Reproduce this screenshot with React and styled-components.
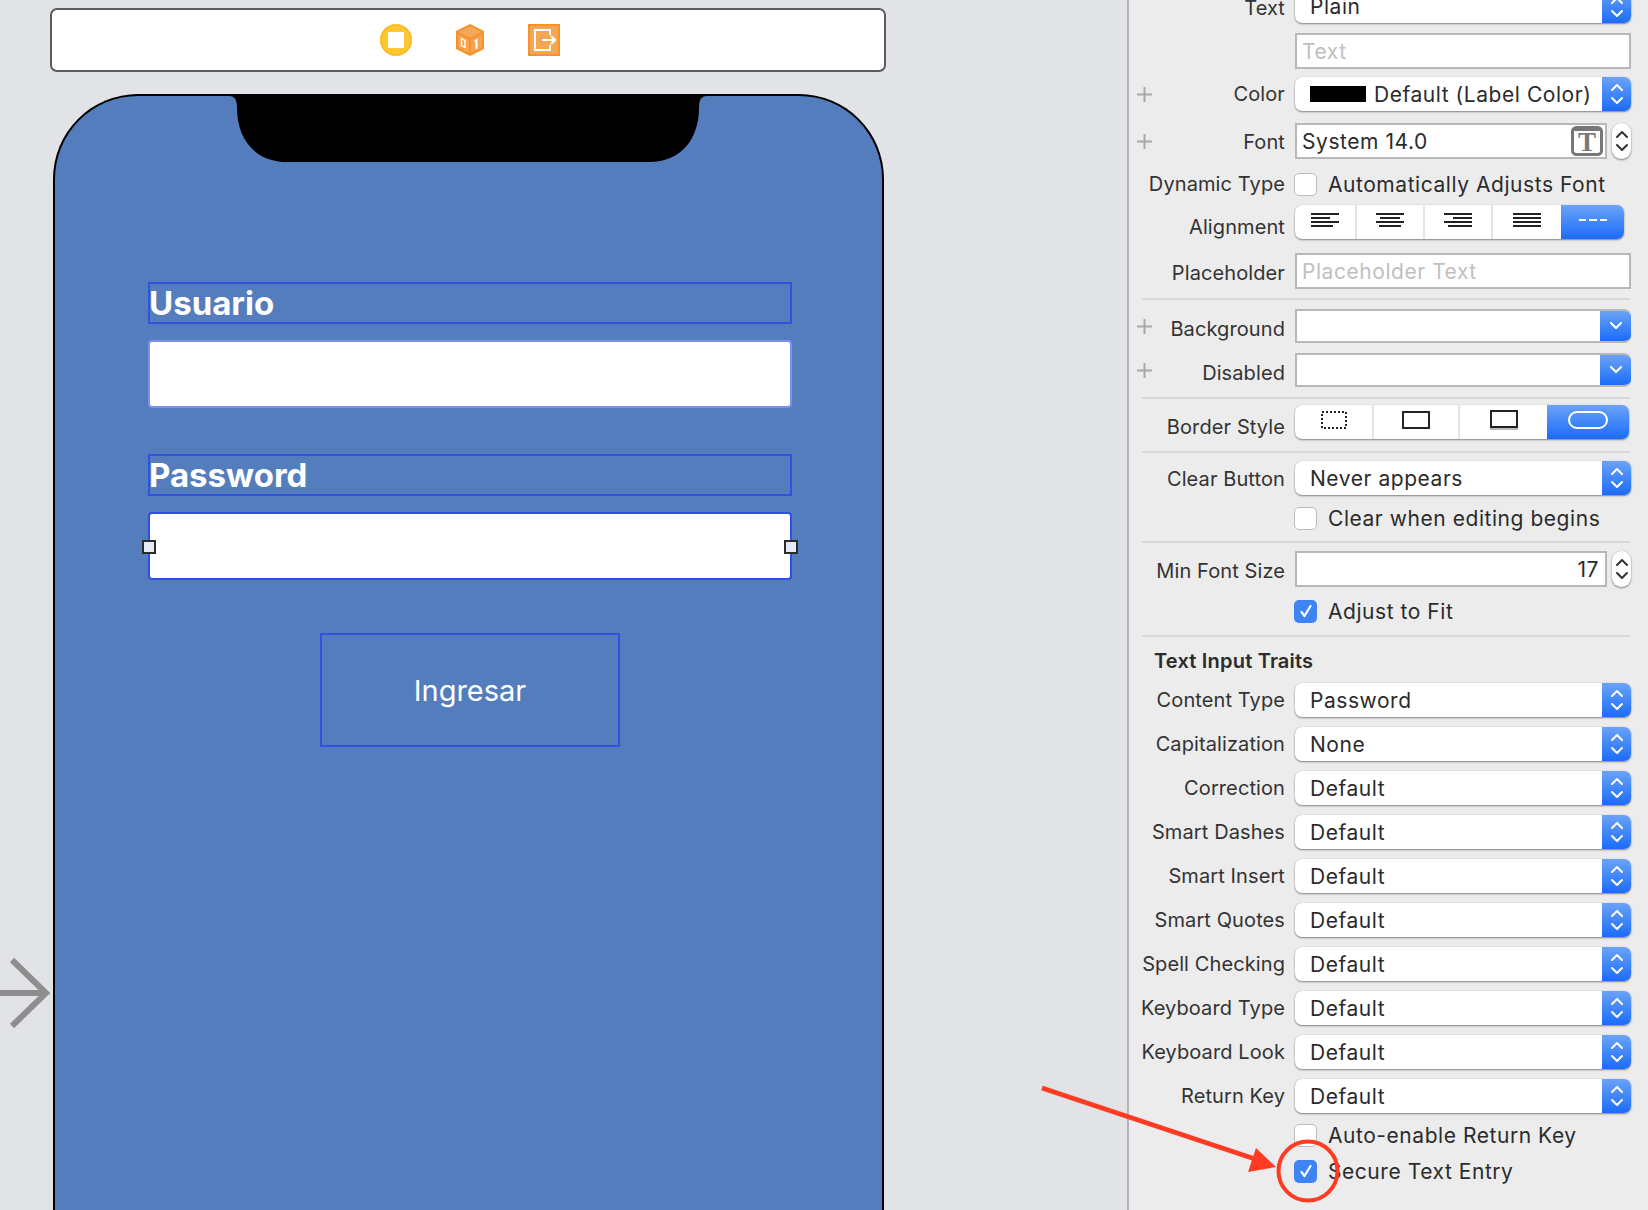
import React from 'react';
import styled, { createGlobalStyle } from 'styled-components';

const GlobalStyle = createGlobalStyle`
  html, body { margin: 0; padding: 0; }
  body { background: #e1e3e7; font-family: Inter, "Liberation Sans", sans-serif; }
`;

const Page = styled.div`
  position: relative;
  display: flex;
  width: 1648px;
  height: 1210px;
  overflow: hidden;
  background: #e1e3e7;
`;

const Canvas = styled.div`
  width: 1127px;
  flex: none;
  display: flex;
  flex-direction: column;
  padding: 8px 0 0 50px;
  box-sizing: border-box;
`;

const Dock = styled.div`
  width: 836px;
  height: 64px;
  flex: none;
  box-sizing: border-box;
  display: flex;
  align-items: center;
  justify-content: center;
  gap: 44px;
  padding-left: 4px;
  background: #fff;
  border: 2px solid #5c5c5e;
  border-radius: 7px;
`;

const Device = styled.div`
  position: relative;
  width: 831px;
  height: 1200px;
  flex: none;
  margin: 22px 0 0 3px;
  box-sizing: border-box;
  background: #547dbd;
  border: 2px solid #000;
  border-bottom: none;
  border-radius: 85px 85px 0 0;
  display: flex;
  flex-direction: column;
  align-items: flex-start;
  padding: 186px 0 0 93px;
`;

const NotchShape = styled.svg`
  position: absolute;
  left: 174px;
  top: -2px;
`;

const FieldLabel = styled.div`
  width: 644px;
  height: 42px;
  box-sizing: border-box;
  border: 2px solid #3350e0;
  margin-top: ${p => p.$gap || 0}px;
  color: #fff;
  font-weight: 700;
  font-size: 33px;
  line-height: 38px;
  text-indent: -1px;
`;

const FieldInput = styled.div`
  position: relative;
  width: 644px;
  height: 68px;
  box-sizing: border-box;
  margin-top: 16px;
  background: #fff;
  border: 2px solid ${p => (p.$selected ? '#2f4de8' : '#7f8ff0')};
  border-radius: 4px;
`;

const Handle = styled.span`
  position: absolute;
  top: 26px;
  ${p => (p.$side === 'left' ? 'left: -8px;' : 'right: -8px;')}
  width: 14px;
  height: 14px;
  box-sizing: border-box;
  background: #e6eaf6;
  border: 2px solid #2b2b2b;
`;

const LoginButton = styled.div`
  width: 300px;
  height: 114px;
  box-sizing: border-box;
  margin: 53px 0 0 172px;
  border: 2px solid #3350e0;
  display: flex;
  align-items: center;
  justify-content: center;
  color: #fff;
  font-size: 29px;
`;

const Panel = styled.div`
  flex: 1;
  box-sizing: border-box;
  border-left: 2px solid #b4b4b6;
  background: #ececec;
  padding-top: 1px;
  color: #2b2b2b;
  font-size: 21px;
  letter-spacing: 0.55px;
`;

const Row = styled.div`
  display: flex;
  align-items: center;
  height: ${p => p.$h || 34}px;
  margin-top: ${p => p.$gap || 0}px;
`;

const LabelCell = styled.div`
  width: 156px;
  flex: none;
  box-sizing: border-box;
  padding-left: 8px;
  display: flex;
  align-items: center;
  justify-content: ${p => (p.$plus ? 'space-between' : 'flex-end')};
  white-space: nowrap;
  font-size: 20px;
  letter-spacing: 0.1px;
  color: #333;
`;

// reference labels sit a little under the middle of their control
const LabelText = styled.span`
  padding-top: ${p => (p.$drop || 0) * 2}px;
`;

const Control = styled.div`
  display: flex;
  align-items: center;
  margin-left: 10px;
  width: 336px;
  height: 100%;
`;

const Popup = styled.div`
  width: 100%;
  height: 100%;
  display: flex;
  align-items: center;
  box-sizing: border-box;
  border-radius: 7px;
  overflow: hidden;
  background: #fff;
  box-shadow: 0 1px 2px rgba(0, 0, 0, 0.45), 0 0 1px rgba(0, 0, 0, 0.2);
`;

const PopupText = styled.div`
  flex: 1;
  padding-left: 15px;
  display: flex;
  align-items: center;
  gap: 8px;
  white-space: nowrap;
`;

const Swatch = styled.span`
  width: 56px;
  height: 16px;
  background: #000;
`;

const BlueTab = styled.div`
  width: ${p => p.$w || 29}px;
  height: 100%;
  flex: none;
  display: flex;
  align-items: center;
  justify-content: center;
  background: linear-gradient(#6ba3f7, #1a6cf9);
`;

const TextBox = styled.div`
  width: ${p => p.$w || 336}px;
  height: 100%;
  flex: none;
  box-sizing: border-box;
  display: flex;
  align-items: center;
  justify-content: ${p => (p.$end ? 'flex-end' : 'space-between')};
  padding: 0 ${p => (p.$end ? 6 : 2)}px 0 5px;
  background: #fff;
  border: 2px solid #b8b8b8;
  color: ${p => (p.$muted ? '#c0c0c0' : '#2b2b2b')};
`;

const Stepper = styled.div`
  width: 19px;
  height: 100%;
  flex: none;
  margin-left: 5px;
  box-sizing: border-box;
  display: flex;
  align-items: center;
  justify-content: center;
  background: #fff;
  border-radius: 9px;
  box-shadow: 0 1px 2px rgba(0, 0, 0, 0.45), 0 0 1px rgba(0, 0, 0, 0.25);
`;

const WellPopup = styled.div`
  width: 100%;
  height: 100%;
  display: flex;
  justify-content: space-between;
  box-sizing: border-box;
  background: #fff;
  border: 2px solid #b8b8b8;
  border-right: none;
  border-radius: 0 7px 7px 0;
  overflow: hidden;
`;

const CheckRow = styled.div`
  display: flex;
  align-items: center;
  gap: 11px;
  margin-left: -1px;
  white-space: nowrap;
`;

const Box = styled.span`
  width: 23px;
  height: 23px;
  flex: none;
  box-sizing: border-box;
  border-radius: 5px;
  display: flex;
  align-items: center;
  justify-content: center;
  background: ${p => (p.$on ? '#3f84f5' : '#fff')};
  border: ${p => (p.$on ? 'none' : '1px solid #bcbcbc')};
`;

const Segments = styled.div`
  display: flex;
  width: ${p => p.$w}px;
  height: 100%;
  border-radius: 7px;
  overflow: hidden;
  background: #fff;
  box-shadow: 0 1px 2px rgba(0, 0, 0, 0.45), 0 0 1px rgba(0, 0, 0, 0.2);
`;

const Segment = styled.div`
  width: ${p => p.$w}px;
  flex: none;
  box-sizing: border-box;
  display: flex;
  align-items: center;
  justify-content: center;
  padding-bottom: 4px;
  border-right: ${p => (p.$last || p.$on ? 'none' : '2px solid #e4e4e4')};
  background: ${p => (p.$on ? 'linear-gradient(#6ba3f7, #1a6cf9)' : 'transparent')};
`;

const Separator = styled.div`
  height: 2px;
  margin: ${p => p.$gap}px 0 0 13px;
  width: 488px;
  background: #d8d8d8;
`;

const Heading = styled.div`
  height: 24px;
  line-height: 24px;
  margin: 12px 0 0 25px;
  font-size: 20px;
  font-weight: 600;
  letter-spacing: 0.2px;
  color: #2b2b2b;
`;

const Annotation = styled.svg`
  position: absolute;
  left: 0;
  top: 0;
  pointer-events: none;
`;

const Updown = ({ color = '#fff' }) => (
  <svg width="16" height="24" viewBox="0 0 16 24" fill="none" stroke={color} strokeWidth="2" strokeLinecap="round" strokeLinejoin="round">
    <path d="M3 8 8 3l5 5M3 16l5 5 5-5" />
  </svg>
);

const Chevron = () => (
  <svg width="16" height="12" viewBox="0 0 16 12" fill="none" stroke="#fff" strokeWidth="2.2" strokeLinecap="round" strokeLinejoin="round">
    <path d="M3 3l5 5 5-5" />
  </svg>
);

const Plus = () => (
  <svg width="15" height="15" viewBox="0 0 15 15" stroke="#a8a8a8" strokeWidth="2">
    <path d="M0 7.5h15M7.5 0v15" />
  </svg>
);

const Check = () => (
  <svg width="16" height="16" viewBox="0 0 16 16" fill="none" stroke="#fff" strokeWidth="2.2" strokeLinecap="round" strokeLinejoin="round">
    <path d="M3.5 9l3 4 6-10" />
  </svg>
);

const FontIcon = () => (
  <svg width="32" height="30" viewBox="0 0 32 30">
    <rect x="1.5" y="1.5" width="29" height="27" rx="4" fill="#fff" stroke="#777" strokeWidth="3" />
    <path d="M2 2h28v3H2z" fill="#777" />
    <text x="16" y="25" textAnchor="middle" fontFamily="Liberation Serif, serif" fontWeight="700" fontSize="27" letterSpacing="0" fill="#777">T</text>
  </svg>
);

// four text lines, x/w per line
const AlignGlyph = ({ lines }) => (
  <svg width="28" height="14" viewBox="0 0 28 14" fill="#222">
    {lines.map(([x, w], i) => <rect key={i} x={x} y={i * 4} width={w} height="2" />)}
  </svg>
);

const DashGlyph = () => (
  <svg width="28" height="14" viewBox="0 0 28 14" fill="#fff">
    <rect x="0" y="6" width="7" height="2" />
    <rect x="10" y="6" width="8" height="2" />
    <rect x="21" y="6" width="7" height="2" />
  </svg>
);

const BorderGlyph = ({ kind }) => {
  if (kind === 'none') {
    return (
      <svg width="26" height="18" viewBox="0 0 26 18" fill="none">
        <rect x="1" y="1" width="24" height="16" stroke="#222" strokeWidth="2" strokeDasharray="2 2" />
      </svg>
    );
  }
  if (kind === 'line') {
    return (
      <svg width="28" height="18" viewBox="0 0 28 18" fill="none">
        <rect x="1" y="1" width="26" height="16" stroke="#222" strokeWidth="2" />
      </svg>
    );
  }
  if (kind === 'bezel') {
    return (
      <svg width="28" height="20" viewBox="0 0 28 20" fill="none">
        <rect x="1" y="1" width="26" height="16" stroke="#222" strokeWidth="2" />
        <path d="M0 19h28" stroke="#bbb" strokeWidth="2" />
      </svg>
    );
  }
  return (
    <svg width="40" height="18" viewBox="0 0 40 18" fill="none">
      <rect x="1" y="1" width="38" height="16" rx="8" stroke="#fff" strokeWidth="2" />
    </svg>
  );
};

const RecordIcon = () => (
  <svg width="32" height="32" viewBox="0 0 32 32">
    <circle cx="16" cy="16" r="16" fill="#fdc72f" />
    <circle cx="16" cy="16" r="15" fill="none" stroke="#fbb92a" strokeWidth="1.5" />
    <rect x="8" y="8" width="16" height="16" fill="#fff" />
  </svg>
);

const CubeIcon = () => (
  <svg width="28" height="32" viewBox="0 0 28 32">
    <path d="M14 0 28 7v18L14 32 0 25V7z" fill="#f6922b" />
    <path d="M14 2.5 25.5 8 14 13.5 2.5 8z" fill="#f4a95a" />
    <path d="M2 10l11 5.5V29L2 23.5z" fill="#f4a450" />
    <path d="M15 15.5 26 10v13.5L15 29z" fill="#f4a450" />
    <path d="M5.5 14.5l3.5 2v7l-3.5-2z" fill="none" stroke="#fff" strokeWidth="1.3" />
    <path d="M18.5 17.5l2-1.2v8.4" fill="none" stroke="#fff" strokeWidth="2" />
  </svg>
);

const ExitIcon = () => (
  <svg width="32" height="32" viewBox="0 0 32 32">
    <rect x="1" y="1" width="30" height="30" fill="#f4a653" stroke="#f6922b" strokeWidth="2" />
    <path d="M22 11V6H7v20h15v-5" fill="none" stroke="#fff" strokeWidth="2" />
    <path d="M14 16h13M23 12l4 4-4 4" fill="none" stroke="#fff" strokeWidth="2" />
  </svg>
);

const alignments = [
  { w: 62, lines: [[0, 28], [0, 19], [0, 28], [0, 22]] },
  { w: 68, lines: [[0, 28], [4, 20], [0, 28], [3, 22]] },
  { w: 68, lines: [[0, 28], [9, 19], [0, 28], [4, 24]] },
  { w: 68, lines: [[0, 28], [0, 28], [0, 28], [0, 28]] },
];

const borderStyles = [
  { w: 79, kind: 'none' },
  { w: 86, kind: 'line' },
  { w: 87, kind: 'bezel' },
];

const traits = [
  ['Content Type', 'Password'],
  ['Capitalization', 'None'],
  ['Correction', 'Default'],
  ['Smart Dashes', 'Default'],
  ['Smart Insert', 'Default'],
  ['Smart Quotes', 'Default'],
  ['Spell Checking', 'Default'],
  ['Keyboard Type', 'Default'],
  ['Keyboard Look', 'Default'],
  ['Return Key', 'Default'],
];

const PopupRow = ({ label, value, gap, plus, swatch, drop }) => (
  <Row $gap={gap}>
    <LabelCell $plus={plus}>{plus && <Plus />}<LabelText $drop={drop}>{label}</LabelText></LabelCell>
    <Control>
      <Popup>
        <PopupText>{swatch && <Swatch />}{value}</PopupText>
        <BlueTab><Updown /></BlueTab>
      </Popup>
    </Control>
  </Row>
);

const WellRow = ({ label, gap }) => (
  <Row $gap={gap}>
    <LabelCell $plus><Plus /><LabelText $drop={3}>{label}</LabelText></LabelCell>
    <Control>
      <WellPopup>
        <span />
        <BlueTab $w={31}><Chevron /></BlueTab>
      </WellPopup>
    </Control>
  </Row>
);

const CheckLine = ({ label, on, gap }) => (
  <Row $h={24} $gap={gap}>
    <LabelCell />
    <Control>
      <CheckRow>
        <Box $on={on}>{on && <Check />}</Box>
        {label}
      </CheckRow>
    </Control>
  </Row>
);

const TextRow = ({ label, gap, value, muted }) => (
  <Row $h={36} $gap={gap}>
    <LabelCell><LabelText $drop={2}>{label}</LabelText></LabelCell>
    <Control>
      <TextBox $muted={muted}>{value}</TextBox>
    </Control>
  </Row>
);

export default function App() {
  return (
    <Page>
      <GlobalStyle />
      <Canvas>
        <Dock>
          <RecordIcon />
          <CubeIcon />
          <ExitIcon />
        </Dock>
        <Device>
          <NotchShape width="478" height="70" viewBox="0 0 478 70">
            <path d="M0 0H478V2C472 2 470 6 470 14C470 44 453 68 420 68H58C25 68 8 44 8 14C8 6 6 2 0 2Z" fill="#000" />
          </NotchShape>
          <FieldLabel>Usuario</FieldLabel>
          <FieldInput />
          <FieldLabel $gap={46}>Password</FieldLabel>
          <FieldInput $selected>
            <Handle $side="left" />
            <Handle $side="right" />
          </FieldInput>
          <LoginButton>Ingresar</LoginButton>
        </Device>
      </Canvas>

      <Panel>
        <Row $h={33} $gap={-11}>
          <LabelCell><LabelText $drop={1}>Text</LabelText></LabelCell>
          <Control>
            <Popup>
              <PopupText>Plain</PopupText>
              <BlueTab><Updown /></BlueTab>
            </Popup>
          </Control>
        </Row>
        <TextRow gap={10} value="Text" muted />
        <PopupRow label="Color" value="Default (Label Color)" gap={8} plus swatch />
        <Row $h={36} $gap={12}>
          <LabelCell $plus><Plus /><LabelText $drop={1}>Font</LabelText></LabelCell>
          <Control>
            <TextBox $w={312}>System 14.0<FontIcon /></TextBox>
            <Stepper><Updown color="#333" /></Stepper>
          </Control>
        </Row>
        <Row $h={24} $gap={13}>
          <LabelCell>Dynamic Type</LabelCell>
          <Control>
            <CheckRow><Box />Automatically Adjusts Font</CheckRow>
          </Control>
        </Row>
        <Row $gap={9}>
          <LabelCell><LabelText $drop={5}>Alignment</LabelText></LabelCell>
          <Control>
            <Segments $w={329}>
              {alignments.map((a, i) => (
                <Segment key={i} $w={a.w} $last={i === 3}><AlignGlyph lines={a.lines} /></Segment>
              ))}
              <Segment $w={63} $on><DashGlyph /></Segment>
            </Segments>
          </Control>
        </Row>
        <TextRow label="Placeholder" gap={14} value="Placeholder Text" muted />
        <Separator $gap={9} />
        <WellRow label="Background" gap={9} />
        <WellRow label="Disabled" gap={10} />
        <Separator $gap={10} />
        <Row $gap={6}>
          <LabelCell><LabelText $drop={5}>Border Style</LabelText></LabelCell>
          <Control>
            <Segments $w={334}>
              {borderStyles.map(b => (
                <Segment key={b.kind} $w={b.w} $last={b.kind === 'bezel'}><BorderGlyph kind={b.kind} /></Segment>
              ))}
              <Segment $w={82} $on><BorderGlyph kind="round" /></Segment>
            </Segments>
          </Control>
        </Row>
        <Separator $gap={12} />
        <PopupRow label="Clear Button" value="Never appears" gap={8} drop={1} />
        <CheckLine label="Clear when editing begins" gap={11} />
        <Separator $gap={11} />
        <Row $h={36} $gap={8}>
          <LabelCell><LabelText $drop={2}>Min Font Size</LabelText></LabelCell>
          <Control>
            <TextBox $w={312} $end>17</TextBox>
            <Stepper><Updown color="#333" /></Stepper>
          </Control>
        </Row>
        <CheckLine label="Adjust to Fit" on gap={12} />
        <Separator $gap={12} />
        <Heading>Text Input Traits</Heading>
        {traits.map(([label, value]) => (
          <PopupRow key={label} label={label} value={value} gap={10} />
        ))}
        <CheckLine label="Auto-enable Return Key" gap={10} />
        <CheckLine label="Secure Text Entry" on gap={12} />
      </Panel>

      <Annotation width="1648" height="1210" viewBox="0 0 1648 1210" fill="none">
        <path d="M0 993H47M12 960l34 33-34 33" stroke="#8e8e8e" strokeWidth="6" />
        <path d="M1042 1088 1258 1160" stroke="#ff3b23" strokeWidth="5" />
        <path d="M1276 1167 1256 1148 1248 1172Z" fill="#ff3b23" />
        <circle cx="1308" cy="1171" r="29.5" stroke="#ff3b23" strokeWidth="4" />
      </Annotation>
    </Page>
  );
}
